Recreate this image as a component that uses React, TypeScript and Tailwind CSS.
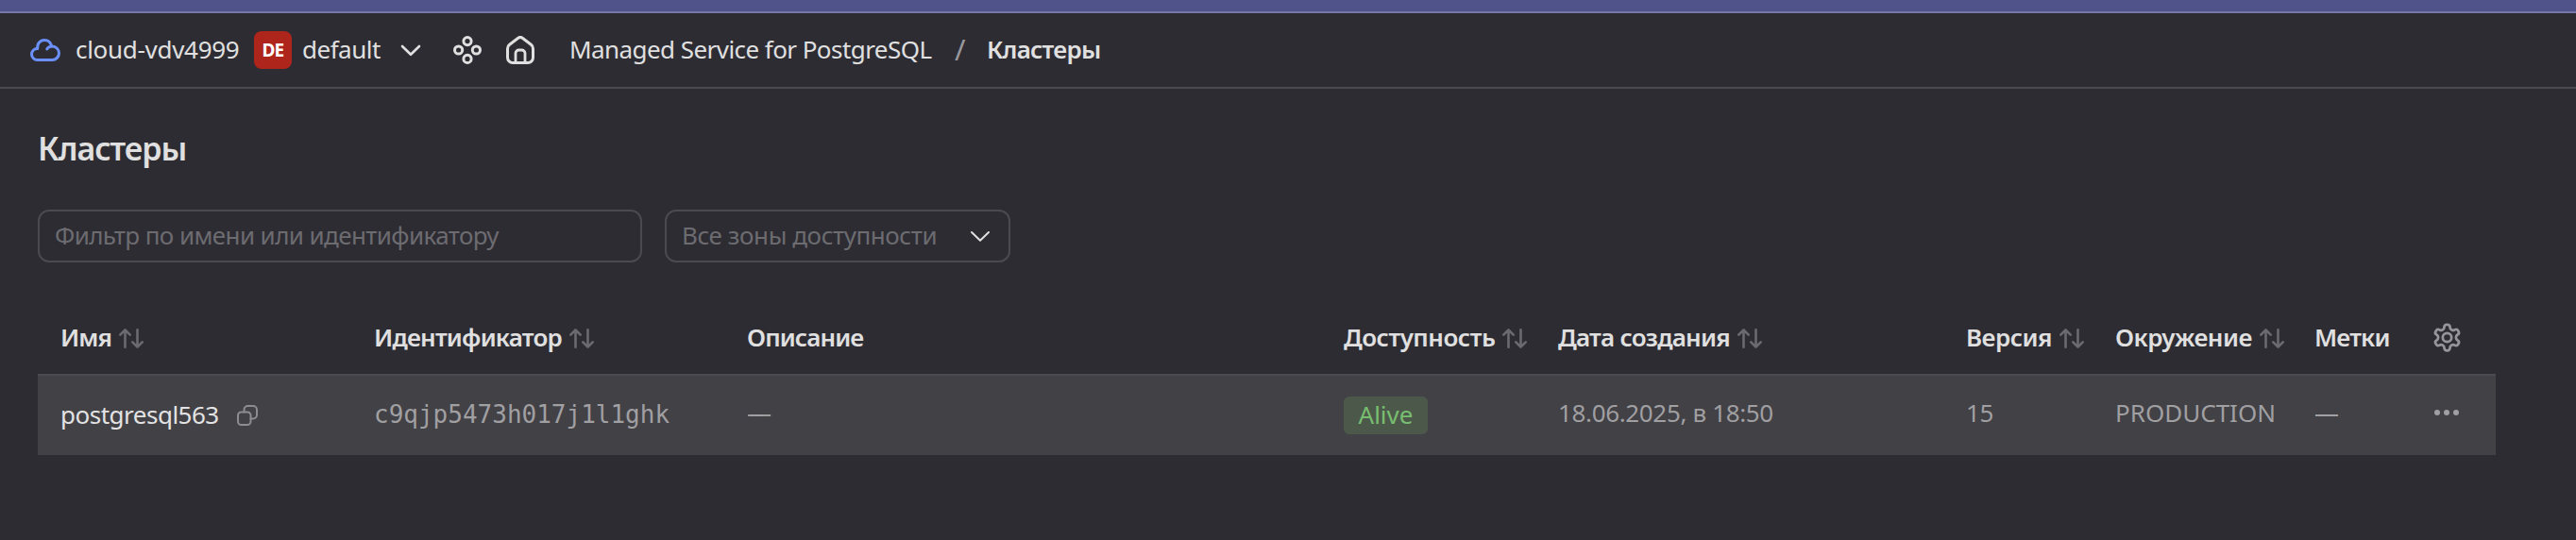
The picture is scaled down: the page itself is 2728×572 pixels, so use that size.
import type { ReactNode } from "react";

const stroke = {
  fill: "none",
  stroke: "currentColor",
  strokeLinecap: "round",
  strokeLinejoin: "round",
} as const;

function CloudIcon() {
  return (
    <svg {...stroke} width="32" height="24" viewBox="0 0 32 24" strokeWidth="3" className="shrink-0 text-[#6b90fb]">
      <path d="M7.6 10.6C7.2 5 10.6 1.5 15 1.5c4 0 6.8 2.6 7.8 6.6" />
      <path d="M17.8 10.9C19 9 21 8.1 23.3 8.1a7.2 7.2 0 0 1 0 14.4H7.5a6 6 0 0 1 0-12" />
    </svg>
  );
}

function ChevronIcon({ weight }: { weight: number }) {
  return (
    <svg {...stroke} width="22" height="13" viewBox="0 0 22 13" strokeWidth={weight} className="shrink-0">
      <path d="M2 2l9 8.8L20 2" />
    </svg>
  );
}

function ServicesIcon() {
  return (
    <svg {...stroke} width="30" height="30" viewBox="0 0 30 30" strokeWidth="3" className="shrink-0">
      <circle cx="15" cy="5.6" r="4.1" />
      <circle cx="5.6" cy="15" r="4.1" />
      <circle cx="24.4" cy="15" r="4.1" />
      <circle cx="15" cy="24.4" r="4.1" />
    </svg>
  );
}

function HomeIcon() {
  return (
    <svg {...stroke} width="30" height="30" viewBox="0 0 30 30" strokeWidth="3" className="shrink-0">
      <path d="M1.5 13.4c0-1.7.8-3.2 2.1-4.2l9.2-7a3.6 3.6 0 0 1 4.4 0l9.2 7c1.3 1 2.1 2.5 2.1 4.2V23a5.5 5.5 0 0 1-5.5 5.5H7A5.5 5.5 0 0 1 1.5 23z" />
      <path d="M10 28v-9.5a3.5 3.5 0 0 1 3.5-3.5h3a3.5 3.5 0 0 1 3.5 3.5V28" strokeWidth="2.8" />
    </svg>
  );
}

function SortIcon() {
  return (
    <svg {...stroke} width="26" height="21" viewBox="0 0 26 21" strokeWidth="2.6" className="shrink-0 text-[#6b6a6f]">
      <path d="M6.5 19.7V1.5M1.3 6.7l5.2-5.2 5.2 5.2" />
      <path d="M19.5 1.3v18.2M14.3 14.3l5.2 5.2 5.2-5.2" />
    </svg>
  );
}

function CopyIcon() {
  return (
    <svg {...stroke} width="22" height="22" viewBox="0 0 22 22" strokeWidth="2" className="shrink-0 text-[#8d8c90]">
      <rect x="1" y="7.5" width="13.5" height="13.5" rx="3.5" />
      <path d="M7.5 7.5V5A4 4 0 0 1 11.5 1H17a4 4 0 0 1 4 4v5.5a4 4 0 0 1-4 4h-2.5" />
    </svg>
  );
}

function GearIcon() {
  return (
    <svg {...stroke} width="33" height="33" viewBox="0 0 24 24" strokeWidth="2" className="shrink-0 text-[#969599]">
      <path d="M12.22 2h-.44a2 2 0 0 0-2 2v.18a2 2 0 0 1-1 1.73l-.43.25a2 2 0 0 1-2 0l-.15-.08a2 2 0 0 0-2.73.73l-.22.38a2 2 0 0 0 .73 2.73l.15.1a2 2 0 0 1 1 1.72v.51a2 2 0 0 1-1 1.74l-.15.09a2 2 0 0 0-.73 2.73l.22.38a2 2 0 0 0 2.73.73l.15-.08a2 2 0 0 1 2 0l.43.25a2 2 0 0 1 1 1.73V20a2 2 0 0 0 2 2h.44a2 2 0 0 0 2-2v-.18a2 2 0 0 1 1-1.73l.43-.25a2 2 0 0 1 2 0l.15.08a2 2 0 0 0 2.73-.73l.22-.39a2 2 0 0 0-.73-2.73l-.15-.08a2 2 0 0 1-1-1.74v-.5a2 2 0 0 1 1-1.74l.15-.09a2 2 0 0 0 .73-2.73l-.22-.38a2 2 0 0 0-2.73-.73l-.15.08a2 2 0 0 1-2 0l-.43-.25a2 2 0 0 1-1-1.73V4a2 2 0 0 0-2-2z" />
      <circle cx="12" cy="12" r="3.4" />
    </svg>
  );
}

function DotsIcon() {
  return (
    <svg width="26" height="6" viewBox="0 0 26 6" fill="currentColor" className="shrink-0">
      <circle cx="3" cy="3" r="3" />
      <circle cx="13" cy="3" r="3" />
      <circle cx="23" cy="3" r="3" />
    </svg>
  );
}

function HeadCell({ children, spacing, sortable = true }: { children: ReactNode; spacing: string; sortable?: boolean }) {
  return (
    <div className="flex items-center gap-2">
      <span className={`font-semibold text-[#e0e0e0] ${spacing}`}>{children}</span>
      {sortable && (
        <span className="pt-[2px]">
          <SortIcon />
        </span>
      )}
    </div>
  );
}

const columns = "grid grid-cols-[332px_395px_632px_227px_432px_158px_211px_1fr] pl-6";

export default function App() {
  return (
    <div className="h-[572px] w-[2728px] overflow-hidden bg-[#2d2c33] font-['Noto_Sans',sans-serif] text-[26px] leading-9 whitespace-nowrap text-[#e0e0e0]">
      <div className="h-[14px] border-b-2 border-[#7577a9] bg-[#50538a]" />

      <header className="flex h-20 items-center border-b-2 border-[#4b4a50] pl-8">
        <CloudIcon />
        <span className="ml-4 w-[189px] pb-[2px] tracking-[-0.3px]">cloud-vdv4999</span>
        <span className="flex size-10 items-center justify-center rounded-[8px] bg-[#ae261b] text-[19px] leading-none font-bold tracking-[-0.8px] text-white">
          DE
        </span>
        <span className="ml-[11px] w-[104px] pb-[2px] tracking-[-0.5px]">default</span>
        <ChevronIcon weight={2.6} />
        <span className="ml-[34px]">
          <ServicesIcon />
        </span>
        <span className="ml-[26px]">
          <HomeIcon />
        </span>
        <nav className="ml-[37px] flex pb-[2px]">
          <span className="w-[408px] tracking-[-0.56px]">Managed Service for PostgreSQL</span>
          <span className="w-[34px] text-[31px] text-[#98979b]">/</span>
          <span className="font-semibold tracking-[-0.75px]">Кластеры</span>
        </nav>
      </header>

      <main className="pt-[39px] pl-10">
        <h1 className="text-[34px] leading-12 font-semibold tracking-[-1px]">Кластеры</h1>

        <div className="mt-[41px] flex gap-6 text-[#6c6b70]">
          <div className="flex h-14 w-[640px] items-center rounded-[12px] border-2 border-[#4b4a50] pb-[2px] pl-4 tracking-[-0.6px]">
            Фильтр по имени или идентификатору
          </div>
          <div className="flex h-14 w-[366px] items-center justify-between rounded-[12px] border-2 border-[#4b4a50] pr-[19px] pl-4">
            <span className="pb-[2px] tracking-[-0.43px]">Все зоны доступности</span>
            <span className="text-[#e0e0e0]">
              <ChevronIcon weight={2} />
            </span>
          </div>
        </div>

        <section className="mt-10 w-[2603px]">
          <div className={`${columns} h-20 border-b-2 border-[#4b4a50]`}>
            <HeadCell spacing="tracking-[-0.9px]">Имя</HeadCell>
            <HeadCell spacing="tracking-[-0.78px]">Идентификатор</HeadCell>
            <HeadCell spacing="tracking-[-0.9px]" sortable={false}>Описание</HeadCell>
            <HeadCell spacing="tracking-[-0.5px]">Доступность</HeadCell>
            <HeadCell spacing="tracking-[-0.75px]">Дата создания</HeadCell>
            <HeadCell spacing="tracking-[-0.5px]">Версия</HeadCell>
            <HeadCell spacing="tracking-[-0.5px]">Окружение</HeadCell>
            <div className="flex items-center justify-between pr-[35px]">
              <HeadCell spacing="tracking-[-0.8px]" sortable={false}>Метки</HeadCell>
              <GearIcon />
            </div>
          </div>

          <div className={`${columns} h-[84px] items-center bg-[#424146] text-[#a09fa2]`}>
            <div className="flex items-center gap-[19px] text-[#e3e3e3]">
              <span className="pb-[2px] tracking-[-0.5px]">postgresql563</span>
              <CopyIcon />
            </div>
            <div className="pb-[2px] font-['DejaVu_Sans_Mono',monospace]">c9qjp5473h017j1l1ghk</div>
            <div className="pb-[6px]">—</div>
            <div>
              <span className="flex h-10 w-[89px] items-center justify-center rounded-[6px] bg-[#4c594a] pb-[2px] text-[#78be71]">
                Alive
              </span>
            </div>
            <div className="pb-[6px] tracking-[-0.35px]">18.06.2025, в 18:50</div>
            <div className="pb-[6px] tracking-[-0.3px]">15</div>
            <div className="pb-[6px]">PRODUCTION</div>
            <div className="flex items-center justify-between pr-[39px] pb-[6px]">
              <span>—</span>
              <DotsIcon />
            </div>
          </div>
        </section>
      </main>
    </div>
  );
}
